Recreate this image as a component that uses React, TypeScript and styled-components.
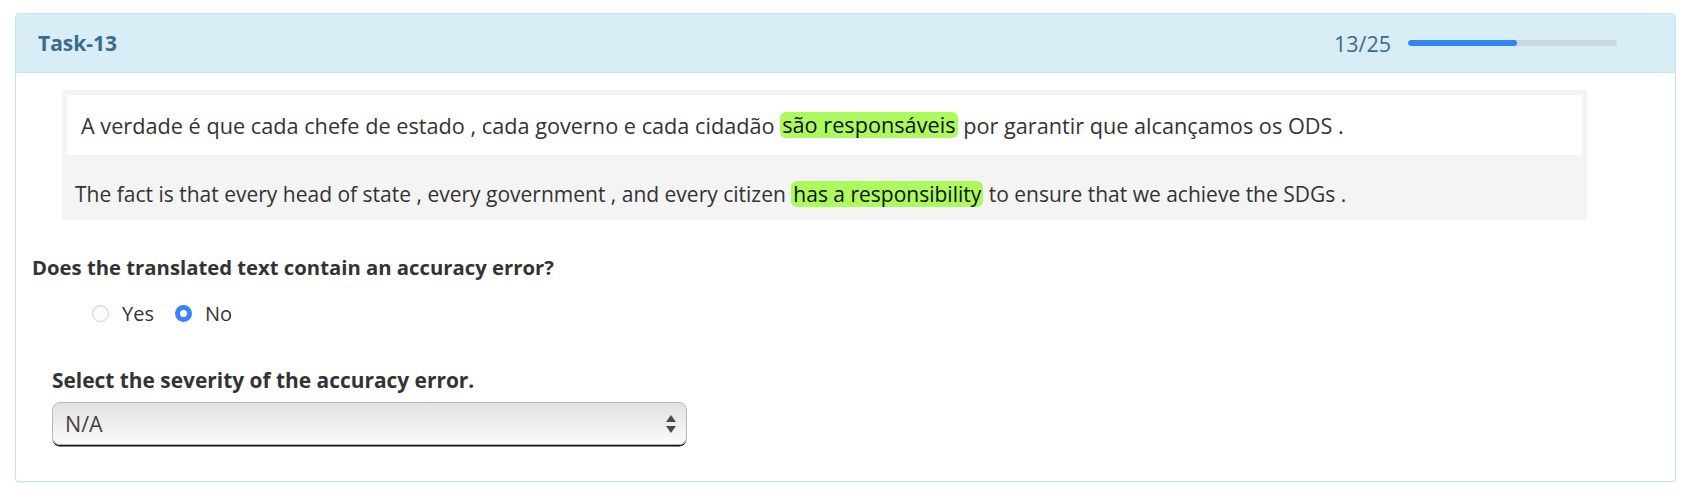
import styled, { createGlobalStyle } from 'styled-components';

const GlobalStyle = createGlobalStyle`
  body {
    margin: 0;
    background: #fff;
    font-family: "Open Sans", "Noto Sans", sans-serif;
    color: #333;
  }
`;

const Page = styled.div`
  padding: 13px 12px 15px 15px;
`;

const Panel = styled.div`
  border: 1px solid #bce8f1;
  border-radius: 4px;
  box-shadow: 0 1px 1px rgba(0, 0, 0, 0.05);
  overflow: hidden;
`;

const Header = styled.div`
  height: 58px;
  background: #d9edf7;
  border-bottom: 1px solid #bce8f1;
  display: flex;
  align-items: center;
  justify-content: space-between;
  padding: 0 58px 0 22px;
`;

const Title = styled.div`
  font-size: 21px;
  font-weight: 700;
  color: #3a6b8c;
`;

const Progress = styled.div`
  display: flex;
  align-items: center;
  gap: 17px;
`;

const Counter = styled.span`
  font-size: 21.5px;
  color: #3a6b8c;
`;

const Track = styled.div`
  width: 209px;
  height: 6px;
  border-radius: 3px;
  background: #c8d9e3;
  overflow: hidden;
`;

const Fill = styled.div`
  height: 100%;
  border-radius: 3px;
  background: #3384f0;
`;

const Body = styled.div`
  padding: 17px 16px 36px 16px;
  display: flex;
  flex-direction: column;
  align-items: flex-start;
`;

const Sentences = styled.div`
  align-self: stretch;
  margin: 0 72px 0 30px;
  background: #f4f4f4;
  padding: 5px 5px 0 5px;
`;

const SourceRow = styled.div`
  height: 60px;
  background: #fff;
  display: flex;
  align-items: center;
  padding-left: 14px;
  font-size: 21.7px;
  white-space: pre;
`;

const TargetRow = styled.div`
  padding: 26px 8px 13px;
  line-height: 26px;
  font-size: 21px;
`;

const Mark = styled.span`
  display: inline-block;
  line-height: 26px;
  background: #acfa5d;
  color: #111;
  border-radius: 6px;
  padding: 0 2px;
`;

const Question = styled.div`
  margin-top: 34px;
  font-size: 20.3px;
  line-height: 26px;
  font-weight: 700;
`;

const Radios = styled.div`
  margin-top: 20px;
  margin-left: 60px;
  display: flex;
  align-items: center;
  height: 26px;
  gap: 21px;
  font-size: 20px;
`;

const Option = styled.label`
  display: flex;
  align-items: center;
  gap: 13px;
`;

const Dot = styled.span<{ $on?: boolean }>`
  width: 17px;
  height: 17px;
  border-radius: 50%;
  box-sizing: border-box;
  background: ${(p) => (p.$on ? '#fff' : '#fbfbfb')};
  border: ${(p) => (p.$on ? '5.5px solid #3a82f7' : '1px solid #cfcfcf')};
  box-shadow: ${(p) => (p.$on ? 'none' : 'inset 0 1px 1px rgba(0,0,0,0.05)')};
`;

const SelectLabel = styled.div`
  margin-top: 41px;
  margin-left: 20px;
  font-size: 20.9px;
  line-height: 26px;
  font-weight: 700;
`;

const Select = styled.div`
  margin-top: 9px;
  margin-left: 20px;
  width: 635px;
  height: 43px;
  box-sizing: border-box;
  border: 1px solid #b8b8b8;
  border-radius: 8px;
  background: linear-gradient(#e2e2e2, #efefef 55%, #fbfbfb);
  box-shadow: 0 2px 0 -0.5px #111;
  display: flex;
  align-items: center;
  justify-content: space-between;
  padding: 0 9px 0 12px;
  font-size: 21.5px;
  color: #444;
`;

const Arrows = () => (
  <svg width="12" height="20" viewBox="0 0 12 20">
    <path d="M6 1 L11 8 L1 8 Z" fill="#4a4a4a" />
    <path d="M6 19 L11 12 L1 12 Z" fill="#4a4a4a" />
  </svg>
);

const App = () => {
  const done = 13;
  const total = 25;
  return (
    <Page>
      <GlobalStyle />
      <Panel>
        <Header>
          <Title>Task-13</Title>
          <Progress>
            <Counter>
              {done}/{total}
            </Counter>
            <Track>
              <Fill style={{ width: `${(done / total) * 100}%` }} />
            </Track>
          </Progress>
        </Header>
        <Body>
          <Sentences>
            <SourceRow>
              A verdade é que cada chefe de estado , cada governo e cada cidadão <Mark>são responsáveis</Mark> por garantir que alcançamos os ODS .
            </SourceRow>
            <TargetRow>
              The fact is that every head of state , every government , and every citizen <Mark>has a responsibility</Mark> to ensure that we achieve the SDGs .
            </TargetRow>
          </Sentences>
          <Question>Does the translated text contain an accuracy error?</Question>
          <Radios>
            <Option>
              <Dot />
              Yes
            </Option>
            <Option>
              <Dot $on />
              No
            </Option>
          </Radios>
          <SelectLabel>Select the severity of the accuracy error.</SelectLabel>
          <Select>
            N/A
            <Arrows />
          </Select>
        </Body>
      </Panel>
    </Page>
  );
};

export default App;
